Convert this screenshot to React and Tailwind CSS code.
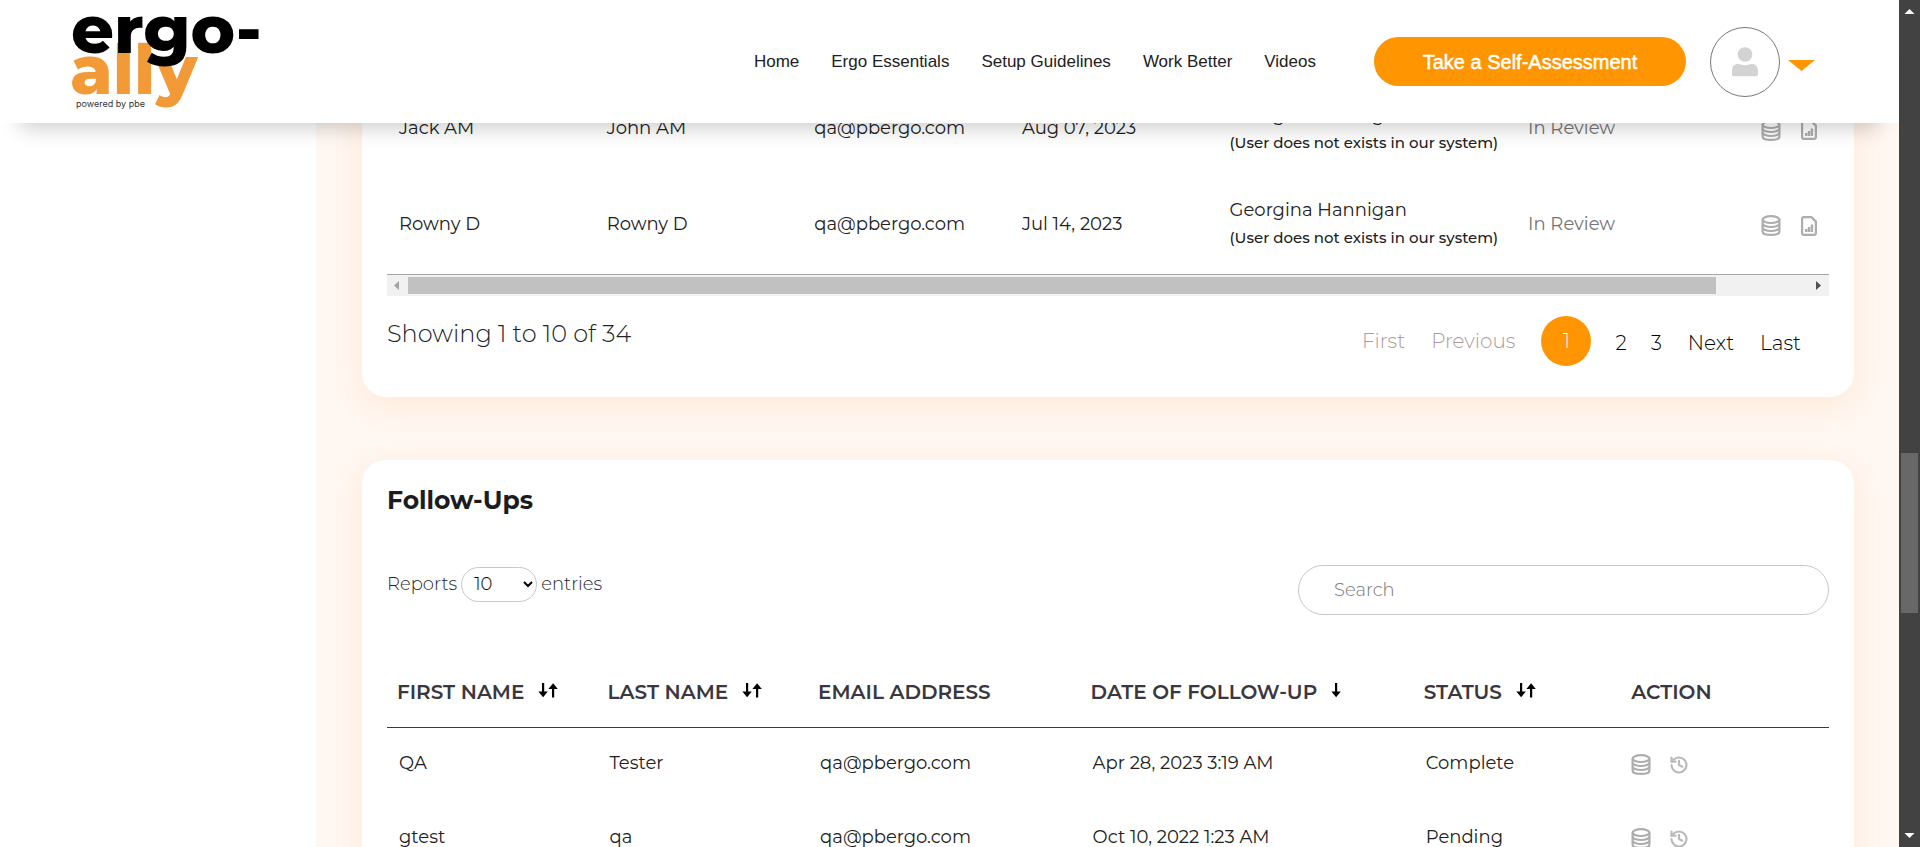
import { History } from 'lucide-react';

const NAV = ['Home', 'Ergo Essentials', 'Setup Guidelines', 'Work Better', 'Videos'];

const REPORTS = [
  { first: 'Jack AM', last: 'John AM', email: 'qa@pbergo.com', date: 'Aug 07, 2023', by: 'Georgina Hannigan', status: 'In Review' },
  { first: 'Rowny D', last: 'Rowny D', email: 'qa@pbergo.com', date: 'Jul 14, 2023', by: 'Georgina Hannigan', status: 'In Review' },
];

const FOLLOW_UPS = [
  { first: 'QA', last: 'Tester', email: 'qa@pbergo.com', date: 'Apr 28, 2023 3:19 AM', status: 'Complete' },
  { first: 'gtest', last: 'qa', email: 'qa@pbergo.com', date: 'Oct 10, 2022 1:23 AM', status: 'Pending' },
];

function Logo() {
  return (
    <svg viewBox="0 0 200 100" className="h-[100px] w-[200px] overflow-visible" role="img" aria-label="ergo-ally powered by pbe">
      <g className="font-['Montserrat','Inter',sans-serif]">
        <text x="-2" y="82" fontSize="68" fontWeight="800" fill="#f29a38">ally</text>
        <text x="-1" y="41" fontSize="67" fontWeight="800" fill="#000">ergo-</text>
      </g>
      <text x="4" y="95" fontSize="9" fill="#333" className="font-['Inter',sans-serif]">powered by pbe</text>
    </svg>
  );
}

function DatabaseIcon() {
  return (
    <svg viewBox="0 0 20 21" className="h-[21px] w-5" fill="none" stroke="#adadad" strokeWidth="2.200" aria-hidden="true">
      <ellipse cx="10" cy="4.600" rx="8.400" ry="3.400" />
      <path d="M1.600 4.600v11.800c0 2.200 3.800 3.500 8.400 3.500s8.400-1.300 8.400-3.500V4.600" />
      <path d="M1.600 8.800c0 1.800 3.800 3.200 8.400 3.200s8.400-1.400 8.400-3.200M1.600 12.800c0 1.800 3.800 3.200 8.400 3.200s8.400-1.400 8.400-3.200" />
    </svg>
  );
}

function ReportIcon() {
  return (
    <svg viewBox="0 0 16 20" className="h-5 w-4" fill="none" stroke="#adadad" strokeWidth="2.200" strokeLinejoin="round" aria-hidden="true">
      <path d="M3 1.100h7.400l4.500 4.500V17a2 2 0 0 1-2 1.900H3A2 2 0 0 1 1.100 17V3A2 2 0 0 1 3 1.100z" />
      <path d="M5.200 13v3M8 11v5M10.900 8.500V16" strokeWidth="2.400" strokeLinejoin="miter" />
    </svg>
  );
}

function SortIcon({ single }) {
  return (
    <svg viewBox="0 0 20 16" className="h-4 w-5" fill="#000" aria-hidden="true">
      <path d="M4 1h2.200v8.500h3.600L5.100 15.200.400 9.500H4z" />
      {!single && <path d="M14 15.500h2.200V7h3.600L15.100 1.300 10.400 7H14z" />}
    </svg>
  );
}

function SortHeader({ label, single }) {
  return (
    <th scope="col" className="pl-[10px] font-semibold">
      <button type="button" className="flex items-start gap-[14px] font-semibold">
        {label}
        <span className="pt-1"><SortIcon single={single} /></span>
      </button>
    </th>
  );
}

function Header() {
  return (
    <header className="relative z-10 flex h-[123px] items-center bg-white pl-[72px] pr-[84px] shadow-[0_25px_20px_-20px_rgba(0,0,0,0.2)]">
      <a href="#home"><Logo /></a>
      <nav className="ml-auto flex gap-8 font-['Liberation_Sans',Arial,sans-serif] text-[17px] text-[#212121]">
        {NAV.map((item) => (
          <a key={item} href={'#' + item.toLowerCase().replace(' ', '-')}>{item}</a>
        ))}
      </nav>
      <button type="button" className="ml-[58px] h-[49px] w-[312px] rounded-full bg-[#ff9500] font-['Liberation_Sans',Arial,sans-serif] text-xl text-white [-webkit-text-stroke:0.5px_white]">
        Take a Self-Assessment
      </button>
      <button type="button" aria-label="Account" className="ml-6 flex items-center gap-2">
        <span className="flex size-[70px] items-center justify-center rounded-full border border-[#777]">
          <svg viewBox="0 0 26 30" className="h-[30px] w-[26px]" fill="#d3d3d3" aria-hidden="true">
            <circle cx="13" cy="7.500" r="7.300" />
            <path d="M0 24c0-4.500 2.500-7 6-7 2 0 3.500 1.200 7 1.200S18 17 20 17c3.500 0 6 2.500 6 7v3.200a2 2 0 0 1-2 2H2a2 2 0 0 1-2-2z" />
          </svg>
        </span>
        <svg viewBox="0 0 27 11" className="mt-2 h-[11px] w-[27px]" fill="#ff9500" aria-hidden="true">
          <path d="M0 0h27L13.500 11z" />
        </svg>
      </button>
    </header>
  );
}

function Reports() {
  return (
    <section className="rounded-b-3xl bg-white px-[25px] pb-[31px] shadow-[0_8px_30px_rgba(255,140,30,0.12)]">
      <table className="w-full table-fixed border-b border-[#a9a9a9] text-left text-[18px] text-[#212121]">
        <colgroup>
          <col className="w-[14.4%]" />
          <col className="w-[14.4%]" />
          <col className="w-[14.4%]" />
          <col className="w-[14.4%]" />
          <col className="w-[20.7%]" />
          <col />
          <col className="w-20" />
        </colgroup>
        <tbody>
          {REPORTS.map((r) => (
            <tr key={r.first} className="h-24">
              <td className="pb-[3px] pl-3">{r.first}</td>
              <td className="pb-[3px] pl-3">{r.last}</td>
              <td className="pb-[3px] pl-3">{r.email}</td>
              <td className="pb-[3px] pl-3">{r.date}</td>
              <td className="whitespace-nowrap pb-[3px] pl-3 leading-[27px]">
                {r.by}
                <br />
                <span className="text-[15px] font-medium">(User does not exists in our system)</span>
              </td>
              <td className="pb-[3px] pl-3 text-[#757575]">{r.status}</td>
              <td>
                <span className="flex items-center gap-5 pl-3">
                  <button type="button" aria-label="Data"><DatabaseIcon /></button>
                  <button type="button" aria-label="Report"><ReportIcon /></button>
                </span>
              </td>
            </tr>
          ))}
        </tbody>
      </table>
      <div className="flex h-[21px] items-center bg-[#f1f1f1]" aria-hidden="true">
        <svg viewBox="0 0 21 21" className="size-[21px]" fill="#a3a3a3"><path d="M12 6v9L7 10.500z" /></svg>
        <div className="flex-1">
          <div className="h-[17px] w-[93.4%] bg-[#c1c1c1]" />
        </div>
        <svg viewBox="0 0 21 21" className="size-[21px]" fill="#505050"><path d="M8 6v9l5-4.500z" /></svg>
      </div>
      <div className="flex items-start justify-between pt-5">
        <p className="pt-[2px] text-2xl font-light text-[#212529]">Showing 1 to 10 of 34</p>
        <nav aria-label="Report pages" className="flex items-center pr-7 text-xl font-light text-black">
          <button type="button" disabled className="text-[#b09a9a]">First</button>
          <button type="button" disabled className="ml-[26px] text-[#b09a9a]">Previous</button>
          <button type="button" aria-current="page" className="ml-[26px] size-[50px] rounded-full bg-[#ff9500] text-white">1</button>
          <button type="button" className="ml-6 pt-1">2</button>
          <button type="button" className="ml-6 pt-1">3</button>
          <button type="button" className="ml-[26px] pt-1">Next</button>
          <button type="button" className="ml-[26px] pt-1">Last</button>
        </nav>
      </div>
    </section>
  );
}

function FollowUps() {
  return (
    <section className="rounded-t-3xl bg-white px-[25px] pt-6 shadow-[0_8px_30px_rgba(255,140,30,0.12)]">
      <h2 className="text-[25px] font-bold leading-8 text-[#1c1c1e]">Follow-Ups</h2>
      <div className="mt-[49px] flex items-start justify-between">
        <label className="mt-[2px] flex items-center gap-1 text-[18px] font-light text-[#212529]">
          Reports
          <select defaultValue="10" className="h-[35px] w-[76px] rounded-full border border-[#c8c8c8] bg-white pl-2 text-black">
            <option>10</option>
            <option>25</option>
            <option>50</option>
          </select>
          entries
        </label>
        <input
          type="search"
          aria-label="Search follow-ups"
          placeholder="Search"
          className="h-[50px] w-[531px] rounded-full border border-[#c8c8c8] px-[35px] text-[18px] font-light placeholder:text-[#757575]"
        />
      </div>
      <table className="mt-10 w-full table-fixed text-left text-[18px] text-[#212121]">
        <colgroup>
          <col className="w-[14.6%]" />
          <col className="w-[14.6%]" />
          <col className="w-[18.9%]" />
          <col className="w-[23.1%]" />
          <col className="w-[14.4%]" />
          <col />
        </colgroup>
        <thead className="border-b border-[#3a3a3f] text-xl leading-7 text-[#3a373f]">
          <tr className="h-[73px] *:pt-[2px]">
            <SortHeader label="FIRST NAME" />
            <SortHeader label="LAST NAME" />
            <th scope="col" className="pl-[10px] font-semibold">EMAIL ADDRESS</th>
            <SortHeader label="DATE OF FOLLOW-UP" single />
            <SortHeader label="STATUS" />
            <th scope="col" className="pl-[10px] font-semibold">ACTION</th>
          </tr>
        </thead>
        <tbody>
          {FOLLOW_UPS.map((r) => (
            <tr key={r.first} className="h-[74px]">
              <td className="pb-[2px] pl-3">{r.first}</td>
              <td className="pb-[2px] pl-3">{r.last}</td>
              <td className="pb-[2px] pl-3">{r.email}</td>
              <td className="pb-[2px] pl-3">{r.date}</td>
              <td className="pb-[2px] pl-3">{r.status}</td>
              <td>
                <span className="flex items-center gap-[18px] pl-[10px]">
                  <button type="button" aria-label="Data"><DatabaseIcon /></button>
                  <button type="button" aria-label="History"><History size={20} strokeWidth={2.6} color="#bababa" /></button>
                </span>
              </td>
            </tr>
          ))}
        </tbody>
      </table>
    </section>
  );
}

export default function App() {
  return (
    <div className="flex h-screen overflow-hidden bg-white font-['Montserrat','Inter',sans-serif]">
      <div className="min-w-0 flex-1">
        <Header />
        <main className="-mt-[41px] ml-[316px] flex flex-col gap-[63px] bg-[#fff7f1] pl-[46px] pr-[45px]">
          <Reports />
          <FollowUps />
        </main>
      </div>
      <div className="flex w-[21px] flex-col bg-[#424242]" aria-hidden="true">
        <svg viewBox="0 0 21 21" className="h-[21px]" fill="#fff"><path d="M5.500 14h10l-5-5z" /></svg>
        <div className="flex flex-1 flex-col px-[2px]">
          <div className="grow-[432]" />
          <div className="grow-[160] bg-[#686868]" />
          <div className="grow-[213]" />
        </div>
        <svg viewBox="0 0 21 21" className="h-[21px]" fill="#fff"><path d="M5.500 7h10l-5 5z" /></svg>
      </div>
    </div>
  );
}
